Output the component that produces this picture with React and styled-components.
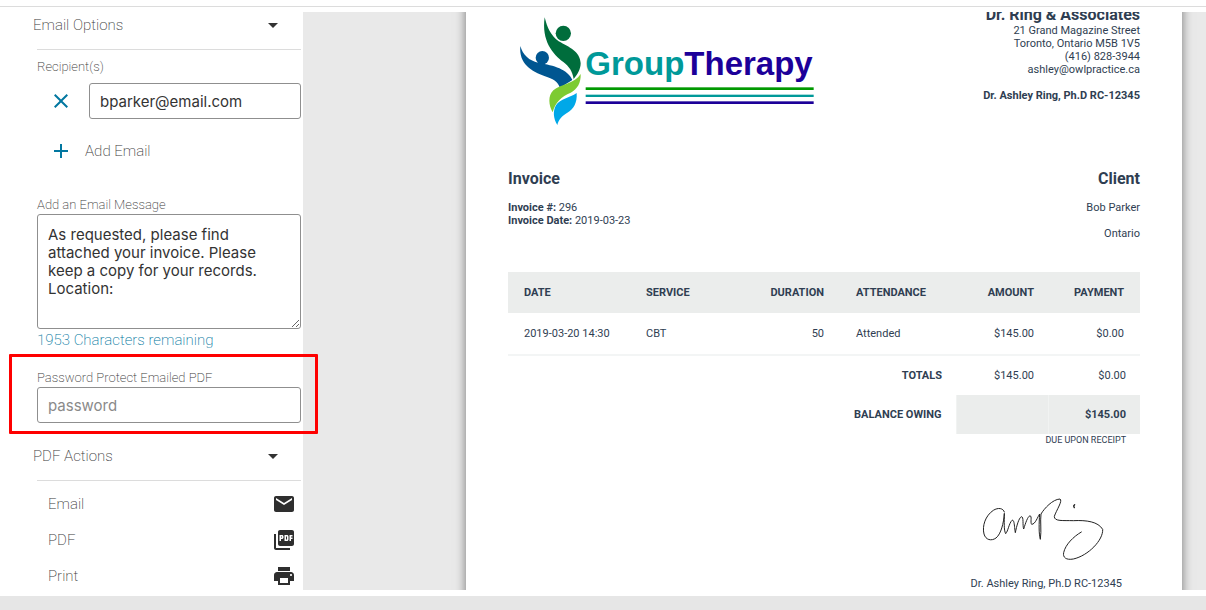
import React, { useState } from "react";
import styled, { createGlobalStyle } from "styled-components";
import {
  MdAdd,
  MdArrowDropDown,
  MdClose,
  MdEmail,
  MdPictureAsPdf,
  MdPrint,
} from "react-icons/md";

const GlobalStyle = createGlobalStyle`
  *, *::before, *::after {
    box-sizing: border-box;
  }
  body {
    margin: 0;
    background: #e6e6e6;
    font-family: Roboto, "Liberation Sans", sans-serif;
  }
`;

const Shell = styled.div`
  background: #fff;
  padding-bottom: 6px;
  margin-bottom: 14px;
`;

const TopBar = styled.header`
  height: 7px;
  margin-bottom: 5px;
  border-bottom: 1px solid #dcdcdc;
`;

const Main = styled.main`
  display: flex;
  height: calc(100vh - 32px);
  overflow: hidden;
`;

const Sidebar = styled.aside`
  position: relative;
  z-index: 1;
  flex: 0 0 303px;
  padding: 0 2px 0 33px;
  background: #fff;
  color: #3c3c3c;
  font-weight: 200;
`;

const SectionHeader = styled.button`
  display: flex;
  align-items: center;
  justify-content: space-between;
  width: 100%;
  height: 26px;
  margin-bottom: 11px;
  padding: 0 16px 0 0;
  border: none;
  background: none;
  color: inherit;
  font-family: inherit;
  font-size: 15px;
  font-weight: inherit;
  cursor: pointer;

  svg {
    color: #333;
  }
`;

const SectionBody = styled.div`
  margin-left: 4px;
  border-top: 1px solid #dcdcdc;
`;

const FieldLabel = styled.label`
  display: block;
  font-size: 13px;
  line-height: 18px;
`;

const TextInput = styled.input`
  width: 100%;
  height: 36px;
  padding: 0 10px;
  border: 1px solid #8f8f8f;
  border-radius: 3px;
  background: #fff;
  color: #333;
  font-family: Inter, "Liberation Sans", sans-serif;
  font-size: 15px;

  &::placeholder {
    color: #8a8a8a;
  }
`;

const TextArea = styled.textarea`
  display: block;
  width: 100%;
  height: 115px;
  padding: 11px 10px;
  border: 1px solid #8f8f8f;
  border-radius: 3px;
  color: #333;
  font-family: Inter, "Liberation Sans", sans-serif;
  font-size: 15px;
  line-height: 18px;
  resize: vertical;
`;

const Recipients = styled.div`
  padding-top: 8px;
`;

const RecipientRow = styled.div`
  display: flex;
  align-items: center;
  margin-top: 7px;
`;

const IconButton = styled.button`
  display: flex;
  flex: 0 0 52px;
  padding: 0 0 0 12px;
  border: none;
  background: none;
  color: #0277a0;
  cursor: pointer;
`;

const AddButton = styled.button`
  display: flex;
  align-items: center;
  gap: 12px;
  height: 24px;
  margin: 20px 0 33px;
  padding: 0 0 0 12px;
  border: none;
  background: none;
  color: inherit;
  font-family: inherit;
  font-size: 15px;
  font-weight: inherit;
  cursor: pointer;

  svg {
    color: #0277a0;
  }
`;

const Remaining = styled.p`
  margin: 0;
  color: #0277a0;
  font-size: 15px;
  line-height: 22px;
`;

const PasswordField = styled.div`
  position: relative;
  margin: 18px 0 20px;
`;

const Highlight = styled.div`
  position: absolute;
  inset: -15px -17px -11px -28px;
  border: 3px solid #fe0000;
  border-radius: 1px;
  pointer-events: none;
`;

const ActionList = styled.ul`
  margin: 0;
  padding: 5px 5px 0 11px;
  list-style: none;
`;

const ActionButton = styled.button`
  display: flex;
  align-items: center;
  justify-content: space-between;
  width: 100%;
  height: 36px;
  padding: 0;
  border: none;
  background: none;
  color: inherit;
  font-family: inherit;
  font-size: 15px;
  font-weight: inherit;
  cursor: pointer;

  svg {
    color: #2e2e2e;
  }
`;

const Viewer = styled.section`
  flex: 1;
  display: flex;
  justify-content: flex-end;
  align-items: flex-start;
  padding-right: 24px;
  background: #e9e9e9;
`;

const Paper = styled.article`
  flex: 0 1 716px;
  min-height: 926px;
  margin-top: -46px;
  padding: 40px 42px;
  background: #fff;
  box-shadow: 0 0 10px rgba(0, 0, 0, 0.5);
  color: #2f3e52;
  font-size: 11px;
  line-height: 13px;
`;

const PaperHeader = styled.div`
  display: flex;
  justify-content: space-between;
  margin-bottom: 42px;
`;

const Logo = styled.svg`
  flex: none;
  width: 300px;
  height: 112px;
  margin: 10px 0 0 8px;
`;

const Address = styled.address`
  font-style: normal;
  text-align: right;

  p {
    margin: 0;
  }
  p:last-child {
    margin-top: 13px;
    font-weight: 700;
  }
`;

const PracticeName = styled.h1`
  margin: 0;
  font-size: 16px;
  line-height: 18px;
`;

const Parties = styled.div`
  display: flex;
  justify-content: space-between;
  margin-bottom: 32px;
`;

const Party = styled.div`
  text-align: ${({ $right }) => ($right ? "right" : "left")};

  h2 {
    margin: 0 0 13px;
    font-size: 16px;
    line-height: 18px;
  }
  p {
    margin: 0 0 ${({ $right }) => ($right ? "13px" : "0")};
  }
  p:last-child {
    margin: 0;
  }
`;

const ItemsTable = styled.table`
  width: 100%;
  border-collapse: collapse;
  table-layout: fixed;

  tbody tr {
    border-bottom: 2px solid #f3f5f5;
  }
`;

const Th = styled.th`
  width: ${({ $width }) => $width};
  height: 41px;
  padding: 0 16px;
  background: #ebedec;
  text-align: ${({ $right }) => ($right ? "right" : "left")};
`;

const Td = styled.td`
  height: 42px;
  padding: 0 16px;
  text-align: ${({ $right }) => ($right ? "right" : "left")};
`;

const TotalsTable = styled.table`
  width: 100%;
  border-collapse: collapse;
  text-align: right;

  th,
  td {
    height: 39px;
    padding: 0 14px;
  }
  td {
    width: 92px;
  }
`;

const BalanceCell = styled.td`
  border-left: 1px solid #f1f3f2;
  background: #ebedec;
  font-weight: 700;
`;

const Terms = styled.p`
  margin: 0 14px 0 0;
  font-size: 9px;
  text-align: right;
`;

const SignatureBlock = styled.div`
  display: flex;
  flex-direction: column;
  align-items: flex-end;
  margin: 43px 18px 0 0;

  svg {
    width: 134px;
    height: 76px;
    margin-right: 12px;
  }
  p {
    margin: 11px 0 0;
  }
`;

const columns = [
  { label: "DATE", width: "122px" },
  { label: "SERVICE", width: "90px" },
  { label: "DURATION", width: "auto", right: true },
  { label: "ATTENDANCE", width: "120px" },
  { label: "AMOUNT", width: "90px", right: true },
  { label: "PAYMENT", width: "90px", right: true },
];

const items = [["2019-03-20 14:30", "CBT", "50", "Attended", "$145.00", "$0.00"]];

const actions = [
  { label: "Email", Icon: MdEmail },
  { label: "PDF", Icon: MdPictureAsPdf },
  { label: "Print", Icon: MdPrint },
];

const GroupTherapyLogo = () => (
  <Logo viewBox="48 48 900 336" role="img" aria-label="GroupTherapy">
    <circle cx="190" cy="100" r="23" fill="#006d3c" />
    <path
      fill="#006d3c"
      d="M134 52C142 84 152 106 176 124C208 142 240 154 242 190C242 208 232 224 221 237C217 214 208 200 190 186C158 163 124 122 134 52Z"
    />
    <circle cx="127" cy="173" r="20" fill="#005691" />
    <path
      fill="#005691"
      d="M61 138C68 164 86 182 118 189C160 196 204 208 217 240C205 249 190 254 180 265C174 243 158 237 135 229C95 214 56 192 61 138Z"
    />
    <path
      fill="#7dcb32"
      d="M242 222C243 250 232 267 212 278C184 290 166 306 158 337C146 317 143 287 160 271C181 253 225 251 242 222Z"
    />
    <path
      fill="#00a8e8"
      d="M230 279C232 308 221 328 202 338C186 347 176 358 172 375C160 355 158 334 168 316C181 295 209 294 230 279Z"
    />
    <text x="256" y="226" fontFamily="Liberation Sans, sans-serif" fontSize="99" fontWeight="700">
      <tspan fill="#009999">Group</tspan>
      <tspan fill="#1c0099">Therapy</tspan>
    </text>
    <rect x="257" y="262" width="684" height="8" fill="#009900" />
    <rect x="257" y="284" width="684" height="7" fill="#009999" />
    <rect x="257" y="304" width="684" height="8" fill="#1c0099" />
  </Logo>
);

const Signature = () => (
  <svg viewBox="108 60 402 228" role="img" aria-label="Signature">
    <g fill="none" stroke="#222" strokeWidth="3" strokeLinecap="round" strokeLinejoin="round">
      <path d="M193 126C190 114 174 112 160 121C136 137 126 168 132 192C137 210 154 214 168 204C183 192 191 160 193 130C193 155 191 180 197 191C204 184 207 160 216 151C224 147 223 175 226 188C230 168 236 145 244 140C252 140 247 165 251 177C257 158 263 140 270 137C277 139 270 157 275 163C286 163 293 140 299 132C297 160 296 190 301 208C305 180 300 155 303 132C313 115 338 88 360 87C369 92 349 121 343 139C342 155 370 151 400 152C440 150 474 155 488 178C490 210 445 257 400 267C378 271 368 262 371 248C376 224 400 200 424 186" />
      <path d="M404 104L401 108L403 113" strokeWidth="4" />
    </g>
  </svg>
);

const App = () => {
  const [email, setEmail] = useState("bparker@email.com");
  const [message, setMessage] = useState(
    "As requested, please find attached your invoice. Please keep a copy for your records. Location:"
  );
  const [password, setPassword] = useState("");

  return (
    <>
      <GlobalStyle />
      <Shell>
        <TopBar />
        <Main>
          <Sidebar>
            <SectionHeader>
              Email Options
              <MdArrowDropDown size={24} />
            </SectionHeader>
            <SectionBody>
              <Recipients>
                <FieldLabel htmlFor="recipient">Recipient(s)</FieldLabel>
                <RecipientRow>
                  <IconButton aria-label="Remove recipient">
                    <MdClose size={24} />
                  </IconButton>
                  <TextInput
                    id="recipient"
                    type="email"
                    value={email}
                    onChange={(e) => setEmail(e.target.value)}
                  />
                </RecipientRow>
              </Recipients>
              <AddButton>
                <MdAdd size={24} />
                Add Email
              </AddButton>
              <FieldLabel htmlFor="message">Add an Email Message</FieldLabel>
              <TextArea
                id="message"
                value={message}
                onChange={(e) => setMessage(e.target.value)}
              />
              <Remaining>1953 Characters remaining</Remaining>
              <PasswordField>
                <FieldLabel htmlFor="password">Password Protect Emailed PDF</FieldLabel>
                <TextInput
                  id="password"
                  placeholder="password"
                  value={password}
                  onChange={(e) => setPassword(e.target.value)}
                />
                <Highlight />
              </PasswordField>
            </SectionBody>

            <SectionHeader>
              PDF Actions
              <MdArrowDropDown size={24} />
            </SectionHeader>
            <SectionBody>
              <ActionList>
                {actions.map(({ label, Icon }) => (
                  <li key={label}>
                    <ActionButton>
                      {label}
                      <Icon size={24} />
                    </ActionButton>
                  </li>
                ))}
              </ActionList>
            </SectionBody>
          </Sidebar>

          <Viewer>
            <Paper>
              <PaperHeader>
                <GroupTherapyLogo />
                <Address>
                  <PracticeName>Dr. Ring &amp; Associates</PracticeName>
                  <p>21 Grand Magazine Street</p>
                  <p>Toronto, Ontario M5B 1V5</p>
                  <p>(416) 828-3944</p>
                  <p>ashley@owlpractice.ca</p>
                  <p>Dr. Ashley Ring, Ph.D RC-12345</p>
                </Address>
              </PaperHeader>

              <Parties>
                <Party>
                  <h2>Invoice</h2>
                  <p><strong>Invoice #:</strong> 296</p>
                  <p><strong>Invoice Date:</strong> 2019-03-23</p>
                </Party>
                <Party $right>
                  <h2>Client</h2>
                  <p>Bob Parker</p>
                  <p>Ontario</p>
                </Party>
              </Parties>

              <ItemsTable>
                <thead>
                  <tr>
                    {columns.map((col) => (
                      <Th key={col.label} $width={col.width} $right={col.right}>
                        {col.label}
                      </Th>
                    ))}
                  </tr>
                </thead>
                <tbody>
                  {items.map((row) => (
                    <tr key={row[0]}>
                      {row.map((cell, i) => (
                        <Td key={columns[i].label} $right={columns[i].right}>
                          {cell}
                        </Td>
                      ))}
                    </tr>
                  ))}
                </tbody>
              </ItemsTable>

              <TotalsTable>
                <tbody>
                  <tr>
                    <th>TOTALS</th>
                    <td>$145.00</td>
                    <td>$0.00</td>
                  </tr>
                  <tr>
                    <th>BALANCE OWING</th>
                    <BalanceCell />
                    <BalanceCell>$145.00</BalanceCell>
                  </tr>
                </tbody>
              </TotalsTable>
              <Terms>DUE UPON RECEIPT</Terms>

              <SignatureBlock>
                <Signature />
                <p>Dr. Ashley Ring, Ph.D RC-12345</p>
              </SignatureBlock>
            </Paper>
          </Viewer>
        </Main>
      </Shell>
    </>
  );
};

export default App;
